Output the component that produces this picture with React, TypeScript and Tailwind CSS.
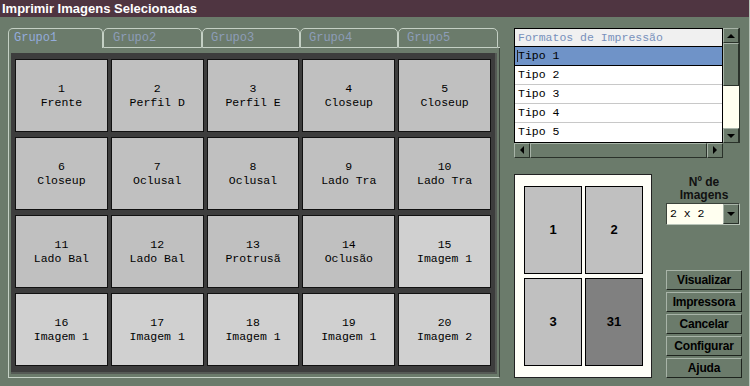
const cells = [
  ["1", "Frente"], ["2", "Perfil D"], ["3", "Perfil E"], ["4", "Closeup"], ["5", "Closeup"],
  ["6", "Closeup"], ["7", "Oclusal"], ["8", "Oclusal"], ["9", "Lado Tra"], ["10", "Lado Tra"],
  ["11", "Lado Bal"], ["12", "Lado Bal"], ["13", "Protrusã"], ["14", "Oclusão"], ["15", "Imagem 1"],
  ["16", "Imagem 1"], ["17", "Imagem 1"], ["18", "Imagem 1"], ["19", "Imagem 1"], ["20", "Imagem 2"],
]

const tabs = [
  { label: "Grupo1", w: "w-[95px]", pl: "pl-[5px]", active: true },
  { label: "Grupo2", w: "w-[99px]", pl: "pl-[9px]", active: false },
  { label: "Grupo3", w: "w-[98px]", pl: "pl-[8px]", active: false },
  { label: "Grupo4", w: "w-[98px]", pl: "pl-[8px]", active: false },
  { label: "Grupo5", w: "w-[100px]", pl: "pl-[8px]", active: false },
]

const formats = ["Tipo 1", "Tipo 2", "Tipo 3", "Tipo 4", "Tipo 5"]
const buttons = ["Visualizar", "Impressora", "Cancelar", "Configurar", "Ajuda"]

const mono = "font-['Liberation_Mono','Courier_New',monospace]"
const sans = "font-['Liberation_Sans',Arial,sans-serif]"

const Arrow = ({ dir }: { dir: "up" | "down" | "left" | "right" }) => {
  const pts = {
    up: "0,5 4,1 8,5",
    down: "0,1 4,5 8,1",
    left: "5,0 1,4 5,8",
    right: "1,0 5,4 1,8",
  }[dir]
  const horiz = dir === "left" || dir === "right"
  return (
    <svg width={horiz ? 6 : 9} height={horiz ? 9 : 6} viewBox={horiz ? "0 0 6 9" : "0 0 9 6"}>
      <polygon points={pts} fill="#000" />
    </svg>
  )
}

const ScrollBtn = ({ dir, className }: { dir: "up" | "down" | "left" | "right"; className: string }) => (
  <div className={`flex items-center justify-center bg-[#6b7b6b] border-t border-l border-t-[#a8b4a8] border-l-[#a8b4a8] border-r border-b border-r-[#2a322a] border-b-[#2a322a] ${className}`}>
    <Arrow dir={dir} />
  </div>
)

export default function App() {
  return (
    <div className={`w-[750px] h-[386px] bg-[#6b7b6b] flex flex-col overflow-hidden border-r border-r-[#b8c4b8] ${sans}`}>
      <div className="h-[17px] bg-[#4f3541] text-white font-bold text-[13px] leading-[17px] pl-[2px]">
        Imprimir Imagens Selecionadas
      </div>

      <div className="flex pl-[8px] pt-[11px]">
        {/* tab control */}
        <div className="w-[492px] flex flex-col">
          <div className="flex h-[20px] items-end">
            {tabs.map(t => (
              <div
                key={t.label}
                className={`${t.w} ${t.pl} h-[20px] rounded-t-[5px] border-t border-l border-r border-[#c4d0c4] ${t.active ? "border-b-0 text-[#94acdc]" : "border-b text-[#8d9db8]"} ${mono} text-[12px] leading-[19px]`}
              >
                {t.label}
              </div>
            ))}
            <div className="flex-1 h-[20px] border-b border-[#c4d0c4]" />
          </div>
          <div className="h-[330px] border-l border-l-[#c4d0c4] border-r border-r-[#3e463e] border-b border-b-[#c4d0c4] pl-[2px] pt-[5px] pr-[2px] pb-[3px]">
            <div className="w-[486px] h-[321px] border-r-[2px] border-b-[2px] border-[#555a55]">
              <div className="w-[484px] h-[319px] bg-[#3d3d3d] pl-[4px] pt-[6px]">
                <div className="grid grid-cols-5 gap-x-[3px] gap-y-[5px] w-[476px]">
                  {cells.map(([n, label], i) => (
                    <div
                      key={n}
                      className={`h-[73px] border border-[#111] flex flex-col items-center justify-center text-black ${mono} text-[11.5px] leading-[14px] ${i >= 14 ? "bg-[#d0d0d0]" : "bg-[#c0c0c0]"}`}
                    >
                      <span>{n}</span>
                      <span className="whitespace-pre">{label}</span>
                    </div>
                  ))}
                </div>
              </div>
            </div>
          </div>
        </div>

        {/* right side */}
        <div className="ml-[14px] w-[228px] flex flex-col">
          <div className="flex flex-col w-[226px]">
            <div className="flex">
              <div className={`w-[209px] h-[115px] border border-black bg-white ${mono} text-[11.5px]`}>
                <div className="h-[18px] bg-[#f0f0f0] text-[#7890bc] leading-[18px] pl-[3px] border-b border-black">
                  Formatos de Impressão
                </div>
                {formats.map((f, i) => (
                  <div
                    key={f}
                    className={`h-[19px] leading-[18px] pl-[3px] text-black relative ${i === 0 ? "bg-[#6f93c8] border-b border-black" : i < formats.length - 1 ? "border-b border-[#c8c8c8]" : ""}`}
                  >
                    {i === 0 && <span className="absolute left-[2px] top-[3px] w-px h-[12px] bg-[#222]" />}
                    {f}
                  </div>
                ))}
              </div>
              <div className="w-[17px] h-[115px] flex flex-col bg-[#fffff0] border-r border-[#2a322a]">
                <ScrollBtn dir="up" className="h-[15px]" />
                <div className="h-[43px] bg-[#6b7b6b] border-t border-l border-[#a8b4a8] border-r border-r-[#2a322a] border-b border-b-[#2a322a]" />
                <div className="flex-1" />
                <ScrollBtn dir="down" className="h-[15px]" />
              </div>
            </div>
            <div className="flex w-[209px] h-[15px]">
              <ScrollBtn dir="left" className="w-[16px]" />
              <div className="flex-1 bg-[#6b7b6b] border-t border-l border-[#a8b4a8] border-r border-r-[#2a322a] border-b border-b-[#2a322a]" />
              <ScrollBtn dir="right" className="w-[16px]" />
            </div>
          </div>

          <div className="flex mt-[16px]">
            <div className="w-[138px] h-[204px] bg-[#fffff8] border border-[#222] pl-[9px] pt-[11px]">
              <div className="grid grid-cols-2 gap-x-[3px] gap-y-[4px] w-[119px]">
                {["1", "2", "3", "31"].map((n, i) => (
                  <div
                    key={n}
                    className={`h-[88px] border border-black flex items-center justify-center font-bold text-[13px] text-black ${i === 3 ? "bg-[#808080]" : "bg-[#c0c0c0]"}`}
                  >
                    {n}
                  </div>
                ))}
              </div>
            </div>

            <div className="ml-[14px] w-[76px] flex flex-col">
              <div className="text-center font-bold text-[12px] leading-[13px] text-[#111] pt-[2px]">
                Nº de<br />Imagens
              </div>
              <div className="mt-[1px] w-[74px] h-[22px] flex border border-t-[#3a423a] border-l-[#3a423a] border-r-[#b8c4b8] border-b-[#b8c4b8] bg-[#fffff0]">
                <div className={`flex-1 ${mono} text-[11.5px] leading-[20px] pl-[3px] text-black whitespace-pre`}>2 x 2</div>
                <ScrollBtn dir="down" className="w-[16px] h-[20px]" />
              </div>
              <div className="mt-[45px] flex flex-col gap-[2px]">
                {buttons.map(b => (
                  <div
                    key={b}
                    className="h-[20px] flex items-center justify-center bg-[#6b7b6b] border-t border-l border-[#a8b4a8] border-r border-r-[#1e241e] border-b border-b-[#1e241e] font-bold text-[12px] text-black tracking-[-0.2px]"
                  >
                    {b}
                  </div>
                ))}
              </div>
            </div>
          </div>
        </div>
      </div>
    </div>
  )
}
